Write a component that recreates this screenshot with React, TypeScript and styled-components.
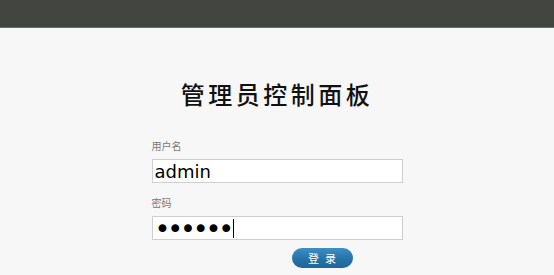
import styled, { createGlobalStyle } from 'styled-components'

const GlobalStyle = createGlobalStyle`
  html, body {
    margin: 0;
    padding: 0;
    background: #f7f7f7;
    font-family: "Noto Sans CJK SC", "DejaVu Sans", sans-serif;
  }
`

const TopBar = styled.div`
  height: 27px;
  background: #434541;
  border-bottom: 1px solid #6a6c68;
`

const Page = styled.div`
  display: flex;
  flex-direction: column;
  align-items: center;
  padding-top: 49px;
`

const Title = styled.h1`
  margin: 0;
  font-family: "Noto Sans CJK SC", sans-serif;
  font-size: 24px;
  font-weight: 500;
  letter-spacing: 3.5px;
  color: #111;
  line-height: 34px;
`

const Form = styled.form`
  width: 251px;
  display: flex;
  flex-direction: column;
  margin-top: 28px;
`

const Label = styled.label`
  font-size: 10px;
  line-height: 14px;
  color: #777;
  margin-bottom: 6px;
`

const FieldWrap = styled.div`
  position: relative;
  margin: 0 0 13px 0;
`

const Field = styled.input<{ $masked?: boolean }>`
  box-sizing: border-box;
  display: block;
  width: 251px;
  height: 24px;
  margin: 0;
  padding: 0 2px;
  border: 1px solid #cfcfcf;
  background: #fff;
  font-family: "DejaVu Sans", sans-serif;
  font-size: ${(p) => (p.$masked ? '27px' : '18px')};
  letter-spacing: ${(p) => (p.$masked ? '-3.2px' : '0')};
  line-height: 22px;
  color: #000;
  outline: none;
  caret-color: transparent;
`

// text cursor as it shows in the focused password box
const Caret = styled.span`
  position: absolute;
  left: 81px;
  top: 3px;
  width: 1px;
  height: 19px;
  background: #000;
  pointer-events: none;
`

const SubmitButton = styled.button`
  margin: -5px 0 0 140px;
  width: 61px;
  height: 20px;
  border: none;
  border-radius: 10px;
  background: linear-gradient(#3d8fc4, #2673a8 55%, #1f6698);
  color: #fff;
  font-family: "Noto Sans CJK SC", sans-serif;
  font-size: 11px;
  letter-spacing: 6px;
  padding: 0 0 0 6px;
  line-height: 20px;
  cursor: pointer;
`

export default function App() {
  return (
    <>
      <GlobalStyle />
      <TopBar />
      <Page>
        <Title>管理员控制面板</Title>
        <Form onSubmit={(e) => e.preventDefault()}>
          <Label>用户名</Label>
          <FieldWrap>
            <Field type="text" defaultValue="admin" />
          </FieldWrap>
          <Label>密码</Label>
          <FieldWrap>
            <Field type="password" defaultValue="123456" $masked />
            <Caret />
          </FieldWrap>
          <SubmitButton type="submit">登录</SubmitButton>
        </Form>
      </Page>
    </>
  )
}
